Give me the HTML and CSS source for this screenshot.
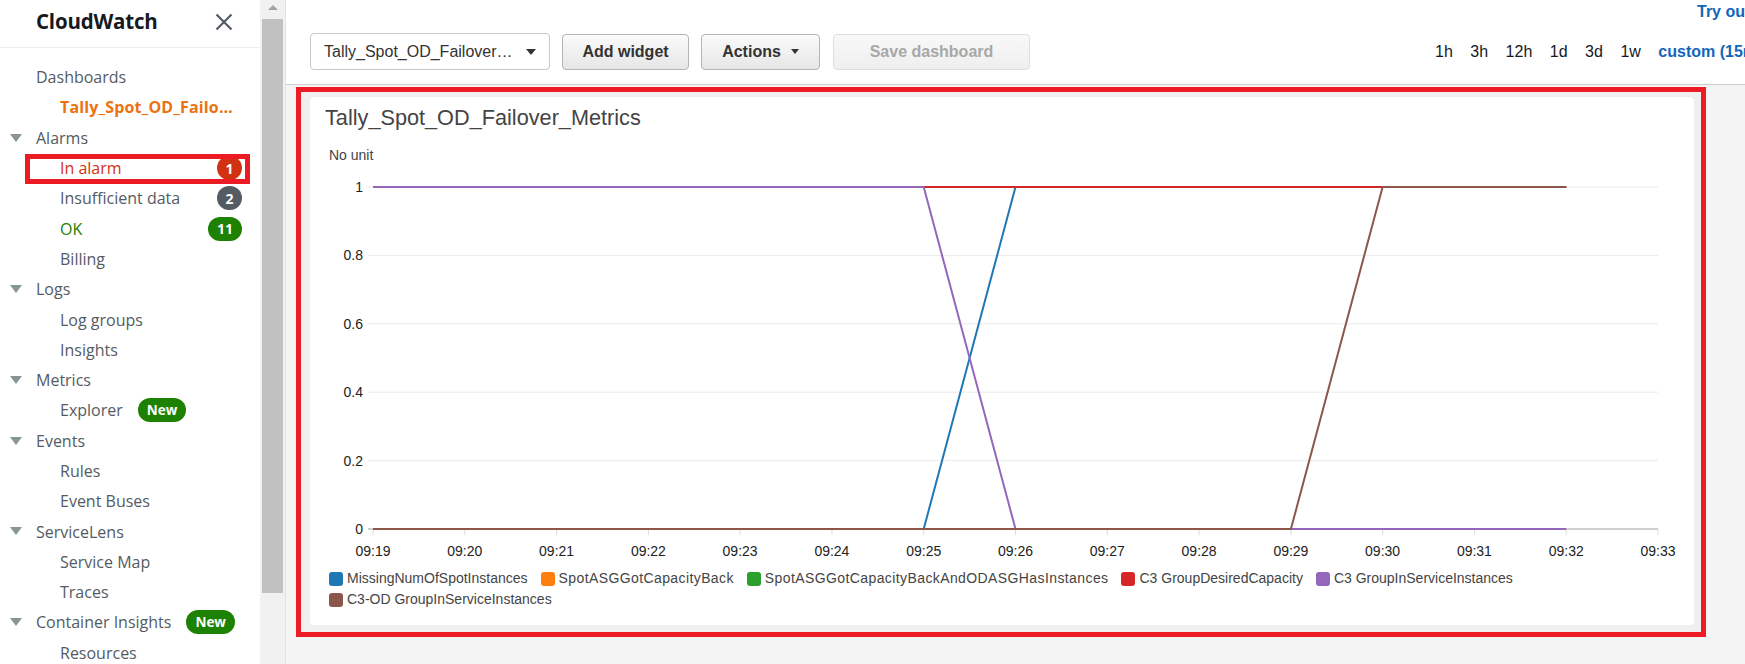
FILE: index.html
```html
<!DOCTYPE html>
<html lang="en">
<head>
<meta charset="utf-8">
<title>CloudWatch Dashboard</title>
<link rel="stylesheet" href="styles.css">
</head>
<body>
<div class="app">
  <nav class="sidebar">
    <div class="side-head">
      <span class="brand">CloudWatch</span>
      <svg class="close" width="18" height="18" viewBox="0 0 18 18"><path d="M1.5 1.5 L16.5 16.5 M16.5 1.5 L1.5 16.5" stroke="#545b64" stroke-width="2.2" fill="none"/></svg>
    </div>
    <ul class="nav">
      <li class="row lvl1">Dashboards</li>
      <li class="row lvl2 current"><span class="clip">Tally_Spot_OD_Failover_Metrics</span></li>
      <li class="row lvl1"><span class="caret"></span>Alarms</li>
      <li class="row lvl2 alarm flagged">In alarm<span class="count red">1</span></li>
      <li class="row lvl2">Insufficient data<span class="count gray">2</span></li>
      <li class="row lvl2 ok">OK<span class="count green">11</span></li>
      <li class="row lvl2">Billing</li>
      <li class="row lvl1"><span class="caret"></span>Logs</li>
      <li class="row lvl2">Log groups</li>
      <li class="row lvl2">Insights</li>
      <li class="row lvl1"><span class="caret"></span>Metrics</li>
      <li class="row lvl2">Explorer<span class="new">New</span></li>
      <li class="row lvl1"><span class="caret"></span>Events</li>
      <li class="row lvl2">Rules</li>
      <li class="row lvl2">Event Buses</li>
      <li class="row lvl1"><span class="caret"></span>ServiceLens</li>
      <li class="row lvl2">Service Map</li>
      <li class="row lvl2">Traces</li>
      <li class="row lvl1"><span class="caret"></span>Container Insights<span class="new">New</span></li>
      <li class="row lvl2">Resources</li>
    </ul>
  </nav>
  <div class="scrollbar"><div class="sb-up"><span class="sb-arrow"></span></div><div class="sb-thumb"></div></div>
  <main class="main">
    <header class="topbar">
      <div class="promo"><a class="link">Try out the new interface</a></div>
      <div class="toolbar">
        <div class="select"><span class="select-text">Tally_Spot_OD_Failover_Metrics</span><span class="dcaret"></span></div>
        <button class="btn w-add">Add widget</button>
        <button class="btn w-act">Actions<span class="dcaret small"></span></button>
        <button class="btn w-save disabled">Save dashboard</button>
        <div class="ranges">
          <span>1h</span><span>3h</span><span>12h</span><span>1d</span><span>3d</span><span>1w</span><a class="link">custom (15m)</a>
        </div>
      </div>
    </header>
    <section class="dash">
      <div class="highlight">
        <div class="card">
          <h2 class="card-title">Tally_Spot_OD_Failover_Metrics</h2>
          <svg class="chart" width="1384" height="438" viewBox="0 0 1384 438">
            <text x="19" y="30" class="unit">No unit</text>
            <g class="grid">
              <line x1="58" y1="57" x2="1348" y2="57"/>
              <line x1="58" y1="125.4" x2="1348" y2="125.4"/>
              <line x1="58" y1="193.8" x2="1348" y2="193.8"/>
              <line x1="58" y1="262.2" x2="1348" y2="262.2"/>
              <line x1="58" y1="330.6" x2="1348" y2="330.6"/>
            </g>
            <g class="ylab">
              <text x="53" y="62">1</text>
              <text x="53" y="130.4">0.8</text>
              <text x="53" y="198.8">0.6</text>
              <text x="53" y="267.2">0.4</text>
              <text x="53" y="335.6">0.2</text>
              <text x="53" y="404">0</text>
            </g>
            <g class="ticks">
              <line x1="63" y1="399" x2="63" y2="405"/>
              <line x1="154.8" y1="399" x2="154.8" y2="405"/>
              <line x1="246.6" y1="399" x2="246.6" y2="405"/>
              <line x1="338.4" y1="399" x2="338.4" y2="405"/>
              <line x1="430.1" y1="399" x2="430.1" y2="405"/>
              <line x1="521.9" y1="399" x2="521.9" y2="405"/>
              <line x1="613.7" y1="399" x2="613.7" y2="405"/>
              <line x1="705.5" y1="399" x2="705.5" y2="405"/>
              <line x1="797.3" y1="399" x2="797.3" y2="405"/>
              <line x1="889.1" y1="399" x2="889.1" y2="405"/>
              <line x1="980.9" y1="399" x2="980.9" y2="405"/>
              <line x1="1072.6" y1="399" x2="1072.6" y2="405"/>
              <line x1="1164.4" y1="399" x2="1164.4" y2="405"/>
              <line x1="1256.2" y1="399" x2="1256.2" y2="405"/>
              <line x1="1348" y1="399" x2="1348" y2="405"/>
            </g>
            <line class="axis" x1="58" y1="399" x2="1348" y2="399"/>
            <g class="xlab">
              <text x="63" y="426">09:19</text>
              <text x="154.8" y="426">09:20</text>
              <text x="246.6" y="426">09:21</text>
              <text x="338.4" y="426">09:22</text>
              <text x="430.1" y="426">09:23</text>
              <text x="521.9" y="426">09:24</text>
              <text x="613.7" y="426">09:25</text>
              <text x="705.5" y="426">09:26</text>
              <text x="797.3" y="426">09:27</text>
              <text x="889.1" y="426">09:28</text>
              <text x="980.9" y="426">09:29</text>
              <text x="1072.6" y="426">09:30</text>
              <text x="1164.4" y="426">09:31</text>
              <text x="1256.2" y="426">09:32</text>
              <text x="1348" y="426">09:33</text>
            </g>
            <g class="series">
              <polyline stroke="#1f77b4" points="63,399 613.7,399 705.5,57 1256.2,57"/>
              <polyline stroke="#d62728" points="613.7,57 1256.2,57"/>
              <polyline stroke="#9467bd" points="63,57 613.7,57 705.5,399 1256.2,399"/>
              <polyline stroke="#8c564b" points="63,399 980.9,399 1072.6,57 1256.2,57"/>
            </g>
          </svg>
          <ul class="legend">
            <li><span class="sw" style="background:#1f77b4"></span>MissingNumOfSpotInstances</li>
            <li class="wide"><span class="sw" style="background:#ff7f0e"></span>SpotASGGotCapacityBack</li>
            <li class="wide"><span class="sw" style="background:#2ca02c"></span>SpotASGGotCapacityBackAndODASGHasInstances</li>
            <li><span class="sw" style="background:#d62728"></span>C3 GroupDesiredCapacity</li>
            <li><span class="sw" style="background:#9467bd"></span>C3 GroupInServiceInstances</li>
            <li><span class="sw" style="background:#8c564b"></span>C3-OD GroupInServiceInstances</li>
          </ul>
        </div>
      </div>
    </section>
  </main>
</div>
</body>
</html>
```
FILE: styles.css
```css
*, *::before, *::after { box-sizing: border-box; }
html, body { margin: 0; padding: 0; }
body {
  width: 1745px;
  height: 664px;
  overflow: hidden;
  background: #fff;
  font-family: "Liberation Sans", Arial, sans-serif;
}
.app { display: flex; height: 664px; }

/* Sidebar */
.sidebar {
  width: 260px;
  flex: 0 0 260px;
  background: #fff;
  font-family: "Open Sans", "Noto Sans", sans-serif;
  color: #545b64;
  overflow: hidden;
}
.side-head {
  height: 48px;
  border-bottom: 1px solid #eaeded;
  display: flex;
  align-items: center;
  justify-content: space-between;
  padding: 0 27px 5px 36px;
}
.brand { font-size: 20.5px; font-weight: 700; color: #16191f; letter-spacing: -0.2px; }
.close { display: block; margin-top: 2px; }
.nav { list-style: none; margin: 0; padding: 14px 0 0 0; }
.row {
  position: relative;
  height: 30.3px;
  display: flex;
  align-items: center;
  font-size: 16px;
  white-space: nowrap;
  padding-right: 18px;
}
.lvl1 { padding-left: 36px; }
.lvl2 { padding-left: 60px; }
.caret {
  position: absolute;
  left: 10px;
  top: 11px;
  width: 0; height: 0;
  border-left: 6px solid transparent;
  border-right: 6px solid transparent;
  border-top: 8px solid #879596;
}
.current { font-weight: 700; color: #ec7211; padding-right: 20px; letter-spacing: 0.15px; }
.clip { overflow: hidden; text-overflow: ellipsis; white-space: nowrap; display: block; }
.alarm { color: #d13212; }
.ok { color: #1d8102; }
.flagged::after {
  content: "";
  position: absolute;
  left: 25px;
  top: 1px;
  width: 225px;
  height: 30px;
  border: 5px solid #ed1c24;
}
.count {
  margin-left: auto;
  min-width: 25px;
  height: 24px;
  border-radius: 12px;
  padding: 0 8px;
  color: #fff;
  font-weight: 700;
  font-size: 14px;
  display: flex;
  align-items: center;
  justify-content: center;
}
.count.red { background: #d13212; }
.count.gray { background: #545b64; }
.count.green { background: #1d8102; padding: 0 9px; }
.new {
  margin-left: 15px;
  height: 24px;
  padding: 0 9px;
  border-radius: 12px;
  background: #1d8102;
  color: #fff;
  font-weight: 700;
  font-size: 13.5px;
  display: flex;
  align-items: center;
}

/* Fake sidebar scrollbar */
.scrollbar {
  width: 25px;
  flex: 0 0 25px;
  background: #f1f1f1;
  display: flex;
  flex-direction: column;
  align-items: center;
}
.sb-up { height: 17px; width: 100%; display: flex; justify-content: center; padding-top: 5px; }
.sb-arrow {
  width: 0; height: 0;
  border-left: 5px solid transparent;
  border-right: 5px solid transparent;
  border-bottom: 5px solid #a3a3a3;
}
.sb-thumb { margin-top: 2px; width: 21px; height: 574px; background: #c1c1c1; }

/* Main */
.main {
  flex: 1 1 auto;
  min-width: 0;
  border-left: 1px solid #e3e3e3;
  background: #f4f4f4;
  overflow: hidden;
}
.topbar {
  background: #fff;
  height: 85px;
  border-bottom: 1px solid #cccccc;
}
.promo {
  height: 24px;
  padding-left: 1411px;
  white-space: nowrap;
  line-height: 24px;
}
.link { color: #1166bb; font-weight: 700; font-size: 16px; text-decoration: none; white-space: nowrap; }
.toolbar {
  display: flex;
  align-items: center;
  margin-top: 9px;
  padding-left: 24px;
  height: 37px;
  gap: 12px;
  white-space: nowrap;
}
.toolbar > * { flex-shrink: 0; }
.select {
  width: 240px;
  height: 37px;
  border: 1px solid #c8c8c8;
  border-radius: 4px;
  background: #fff;
  display: flex;
  align-items: center;
  padding: 0 13px 0 13px;
  font-size: 16px;
  color: #333;
}
.select-text { width: 193px; overflow: hidden; text-overflow: ellipsis; white-space: nowrap; }
.dcaret {
  margin-left: 10px;
  width: 0; height: 0;
  border-left: 5px solid transparent;
  border-right: 5px solid transparent;
  border-top: 6px solid #333;
}
.dcaret.small { margin-left: 10px; border-left-width: 4px; border-right-width: 4px; border-top-width: 5px; }
.btn {
  height: 36px;
  border: 1px solid #b4b4b4;
  border-radius: 4px;
  background: linear-gradient(#fbfbfb, #e6e6e6);
  font-family: "Liberation Sans", Arial, sans-serif;
  font-weight: 700;
  font-size: 16px;
  color: #333;
  display: flex;
  align-items: center;
  justify-content: center;
  padding: 0;
}
.w-add { width: 127px; }
.w-act { width: 119px; }
.w-save { width: 197px; margin-left: 1px; }
.btn.disabled {
  color: #a8a8a8;
  border-color: #dddddd;
  background: linear-gradient(#f8f8f8, #efefef);
}
.ranges {
  margin-left: 393px;
  display: flex;
  align-items: center;
  gap: 17.5px;
  font-size: 16px;
  color: #16191f;
}

/* Dashboard */
.dash { padding: 2px 0 0 10px; }
.highlight {
  width: 1410px;
  height: 550px;
  border: 5px solid #ed1c24;
  background: #f0f0f0;
  padding: 5px 7px 8px 9px;
}
.card {
  width: 1384px;
  height: 528px;
  background: #fff;
  border-radius: 4px;
  box-shadow: 0 0 1px rgba(0,0,0,0.08);
}
.card-title {
  margin: 0;
  padding: 9px 0 0 15px;
  height: 33px;
  font-size: 21.7px;
  line-height: 24px;
  font-weight: 400;
  color: #444;
}
.chart { display: block; font-family: "Liberation Sans", Arial, sans-serif; font-size: 14px; }
.unit { fill: #444; }
.grid line { stroke: #ebebeb; stroke-width: 1; }
.ticks line { stroke: #dcdcdc; stroke-width: 1; }
.axis { stroke: #cfcfcf; stroke-width: 2; }
.ylab text { fill: #222; text-anchor: end; }
.xlab text { fill: #222; text-anchor: middle; }
.series polyline { fill: none; stroke-width: 2; stroke-linejoin: round; }
.legend {
  list-style: none;
  margin: 0;
  padding: 0 20px 0 19px;
  display: flex;
  flex-wrap: wrap;
  font-size: 14px;
  line-height: 21px;
  color: #444;
}
.legend li { display: flex; align-items: center; margin-right: 13px; white-space: nowrap; }
.legend li.wide { letter-spacing: 0.4px; }
.sw { width: 14px; height: 14px; border-radius: 3px; margin-right: 4px; }
```
